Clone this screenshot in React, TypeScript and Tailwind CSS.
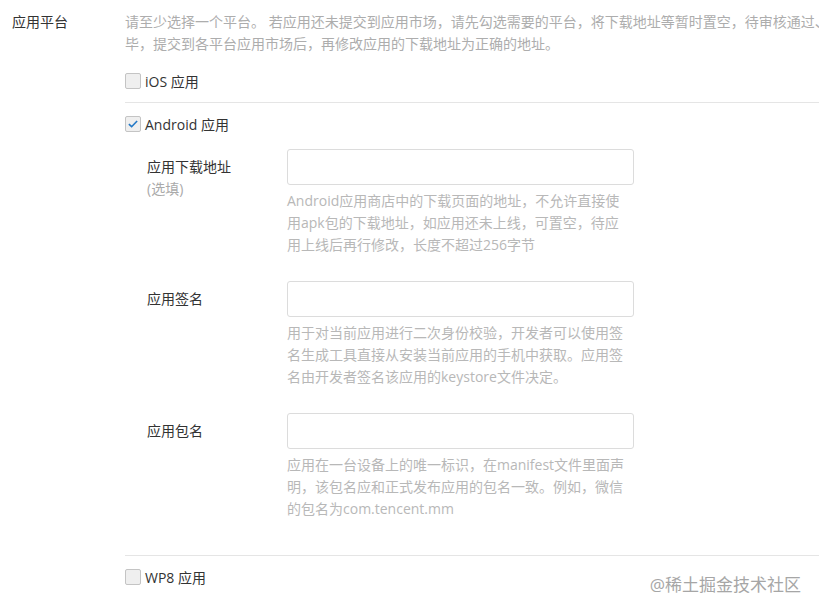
import { useState } from "react";

const FONT = { fontFamily: '"Open Sans", "Noto Sans CJK SC", sans-serif' };

function Checkbox({ label, checked, onToggle }: { label: string; checked: boolean; onToggle: () => void }) {
  return (
    <label className="flex items-center h-[22px] cursor-pointer select-none" onClick={onToggle}>
      <span className="w-[16px] h-[16px] rounded-[2px] border border-[#c4c4c4] bg-[#efefef] flex items-center justify-center shrink-0">
        {checked && (
          <svg viewBox="0 0 16 16" className="w-[12px] h-[12px]">
            <path d="M2.5 8.2 L6.2 11.6 L13.5 4" fill="none" stroke="#2479c7" strokeWidth="2.2" />
          </svg>
        )}
      </span>
      <span className="ml-[4px] text-[14px] text-[#333]">{label}</span>
    </label>
  );
}

interface FieldProps {
  label: string;
  optional?: boolean;
  help: string;
}

function Field({ label, optional, help }: FieldProps) {
  return (
    <div className="flex">
      <div className="w-[140px] shrink-0 pt-[7px] leading-[22px] text-[14px]">
        <div className="text-[#333]">{label}</div>
        {optional && <div className="text-[#aaa]">(选填)</div>}
      </div>
      <div className="w-[347px]">
        <input className="block w-full h-[36px] border border-[#dcdcdc] rounded-[3px] px-2 text-[14px] outline-none" />
        <p className="mt-[5px] w-[342px] text-[14px] leading-[22px] text-[#b8b8b8]">{help}</p>
      </div>
    </div>
  );
}

export default function App() {
  const [ios, setIos] = useState(false);
  const [android, setAndroid] = useState(true);
  const [wp8, setWp8] = useState(false);

  return (
    <div className="relative min-h-[615px] bg-white overflow-hidden" style={FONT}>
      <div className="flex pt-[11px]">
        <div className="w-[125px] shrink-0 pl-[12px] text-[14px] leading-[22px] text-[#333]">应用平台</div>
        <div className="flex-1 min-w-0">
          <p className="w-[716px] text-[14px] leading-[22px] text-[#adadad]">
            请至少选择一个平台。 若应用还未提交到应用市场，请先勾选需要的平台，将下载地址等暂时置空，待审核通过、毕，提交到各平台应用市场后，再修改应用的下载地址为正确的地址。
          </p>

          <div className="mt-[15px] pb-[10px] border-b border-[#e5e5e5]">
            <Checkbox label="iOS 应用" checked={ios} onToggle={() => setIos(!ios)} />
          </div>

          <div className="pt-[10px] pb-[35px] border-b border-[#e5e5e5]">
            <Checkbox label="Android 应用" checked={android} onToggle={() => setAndroid(!android)} />
            <div className="pl-[22px] mt-[14px] flex flex-col gap-[25px]">
              <Field
                label="应用下载地址"
                optional
                help="Android应用商店中的下载页面的地址，不允许直接使用apk包的下载地址，如应用还未上线，可置空，待应用上线后再行修改，长度不超过256字节"
              />
              <Field
                label="应用签名"
                help="用于对当前应用进行二次身份校验，开发者可以使用签名生成工具直接从安装当前应用的手机中获取。应用签名由开发者签名该应用的keystore文件决定。"
              />
              <Field
                label="应用包名"
                help="应用在一台设备上的唯一标识，在manifest文件里面声明，该包名应和正式发布应用的包名一致。例如，微信的包名为com.tencent.mm"
              />
            </div>
          </div>

          <div className="pt-[10px]">
            <Checkbox label="WP8 应用" checked={wp8} onToggle={() => setWp8(!wp8)} />
          </div>
        </div>
      </div>

      <div className="absolute right-[18px] top-[573px] text-[17px] leading-[24px] text-[#a6a6a6]">@稀土掘金技术社区</div>
    </div>
  );
}
